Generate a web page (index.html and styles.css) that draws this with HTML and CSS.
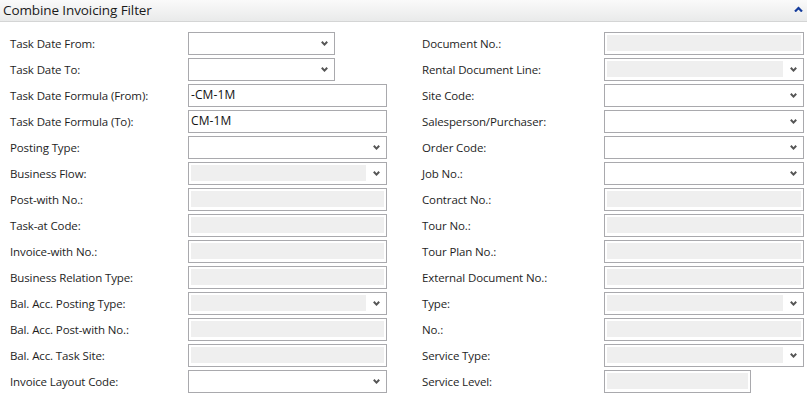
FILE: index.html
```html
<!DOCTYPE html>
<html>
<head>
<meta charset="utf-8">
<link rel="stylesheet" href="styles.css">
</head>
<body>
<div class="header">
  <span class="title">Combine Invoicing Filter</span>
  <svg class="collapse" width="9" height="6" viewBox="0 0 9 6"><path d="M1 5.5 L4.5 2 L8 5.5" fill="none" stroke="#143c9c" stroke-width="2.2"/></svg>
</div>
<div class="form">
  <label class="lbl">Task Date From:</label>
  <div class="field date select"><span class="val"></span><svg class="chev" width="7" height="5" viewBox="0 0 7 5"><path d="M0.8 0.8 L3.5 3.6 L6.2 0.8" fill="none" stroke="#555" stroke-width="2"/></svg></div>
  <label class="lbl r">Document No.:</label>
  <div class="field ro"><span class="fill"></span></div>

  <label class="lbl">Task Date To:</label>
  <div class="field date select"><span class="val"></span><svg class="chev" width="7" height="5" viewBox="0 0 7 5"><path d="M0.8 0.8 L3.5 3.6 L6.2 0.8" fill="none" stroke="#555" stroke-width="2"/></svg></div>
  <label class="lbl r">Rental Document Line:</label>
  <div class="field ro select"><span class="fill"></span><svg class="chev" width="7" height="5" viewBox="0 0 7 5"><path d="M0.8 0.8 L3.5 3.6 L6.2 0.8" fill="none" stroke="#555" stroke-width="2"/></svg></div>

  <label class="lbl">Task Date Formula (From):</label>
  <div class="field"><span class="val">-CM-1M</span></div>
  <label class="lbl r">Site Code:</label>
  <div class="field select"><span class="val"></span><svg class="chev" width="7" height="5" viewBox="0 0 7 5"><path d="M0.8 0.8 L3.5 3.6 L6.2 0.8" fill="none" stroke="#555" stroke-width="2"/></svg></div>

  <label class="lbl">Task Date Formula (To):</label>
  <div class="field"><span class="val">CM-1M</span></div>
  <label class="lbl r">Salesperson/Purchaser:</label>
  <div class="field select"><span class="val"></span><svg class="chev" width="7" height="5" viewBox="0 0 7 5"><path d="M0.8 0.8 L3.5 3.6 L6.2 0.8" fill="none" stroke="#555" stroke-width="2"/></svg></div>

  <label class="lbl">Posting Type:</label>
  <div class="field select"><span class="val"></span><svg class="chev" width="7" height="5" viewBox="0 0 7 5"><path d="M0.8 0.8 L3.5 3.6 L6.2 0.8" fill="none" stroke="#555" stroke-width="2"/></svg></div>
  <label class="lbl r">Order Code:</label>
  <div class="field select"><span class="val"></span><svg class="chev" width="7" height="5" viewBox="0 0 7 5"><path d="M0.8 0.8 L3.5 3.6 L6.2 0.8" fill="none" stroke="#555" stroke-width="2"/></svg></div>

  <label class="lbl">Business Flow:</label>
  <div class="field ro select"><span class="fill"></span><svg class="chev" width="7" height="5" viewBox="0 0 7 5"><path d="M0.8 0.8 L3.5 3.6 L6.2 0.8" fill="none" stroke="#555" stroke-width="2"/></svg></div>
  <label class="lbl r">Job No.:</label>
  <div class="field select"><span class="val"></span><svg class="chev" width="7" height="5" viewBox="0 0 7 5"><path d="M0.8 0.8 L3.5 3.6 L6.2 0.8" fill="none" stroke="#555" stroke-width="2"/></svg></div>

  <label class="lbl">Post-with No.:</label>
  <div class="field ro"><span class="fill"></span></div>
  <label class="lbl r">Contract No.:</label>
  <div class="field ro"><span class="fill"></span></div>

  <label class="lbl">Task-at Code:</label>
  <div class="field ro"><span class="fill"></span></div>
  <label class="lbl r">Tour No.:</label>
  <div class="field ro"><span class="fill"></span></div>

  <label class="lbl">Invoice-with No.:</label>
  <div class="field ro"><span class="fill"></span></div>
  <label class="lbl r">Tour Plan No.:</label>
  <div class="field ro"><span class="fill"></span></div>

  <label class="lbl">Business Relation Type:</label>
  <div class="field ro"><span class="fill"></span></div>
  <label class="lbl r">External Document No.:</label>
  <div class="field ro"><span class="fill"></span></div>

  <label class="lbl">Bal. Acc. Posting Type:</label>
  <div class="field ro select"><span class="fill"></span><svg class="chev" width="7" height="5" viewBox="0 0 7 5"><path d="M0.8 0.8 L3.5 3.6 L6.2 0.8" fill="none" stroke="#555" stroke-width="2"/></svg></div>
  <label class="lbl r">Type:</label>
  <div class="field ro select"><span class="fill"></span><svg class="chev" width="7" height="5" viewBox="0 0 7 5"><path d="M0.8 0.8 L3.5 3.6 L6.2 0.8" fill="none" stroke="#555" stroke-width="2"/></svg></div>

  <label class="lbl">Bal. Acc. Post-with No.:</label>
  <div class="field ro"><span class="fill"></span></div>
  <label class="lbl r">No.:</label>
  <div class="field ro"><span class="fill"></span></div>

  <label class="lbl">Bal. Acc. Task Site:</label>
  <div class="field ro"><span class="fill"></span></div>
  <label class="lbl r">Service Type:</label>
  <div class="field ro select"><span class="fill"></span><svg class="chev" width="7" height="5" viewBox="0 0 7 5"><path d="M0.8 0.8 L3.5 3.6 L6.2 0.8" fill="none" stroke="#555" stroke-width="2"/></svg></div>

  <label class="lbl">Invoice Layout Code:</label>
  <div class="field select"><span class="val"></span><svg class="chev" width="7" height="5" viewBox="0 0 7 5"><path d="M0.8 0.8 L3.5 3.6 L6.2 0.8" fill="none" stroke="#555" stroke-width="2"/></svg></div>
  <label class="lbl r">Service Level:</label>
  <div class="field ro date"><span class="fill"></span></div>
</div>
</body>
</html>
```
FILE: styles.css
```css
html, body {
  margin: 0;
  padding: 0;
  background: #ffffff;
}
body {
  font-family: "Open Sans", "Noto Sans", sans-serif;
  color: #1e1e1e;
  width: 807px;
  height: 403px;
  overflow: hidden;
}
.header {
  height: 21px;
  border-bottom: 1px solid #d4d5d5;
  background: linear-gradient(#fafafa, #e9eaea);
  display: flex;
  align-items: center;
  justify-content: space-between;
  padding: 0 4px 0 3px;
}
.title {
  font-size: 13.5px;
  color: #1a1a1a;
  line-height: 21px;
  letter-spacing: -0.1px;
}
.collapse {
  margin-top: -4px;
}
.form {
  display: grid;
  grid-template-columns: 178px 199px 217px 200px;
  grid-auto-rows: 23px;
  row-gap: 3px;
  padding: 10px 0 0 10px;
}
.lbl {
  font-size: 11.5px;
  display: flex;
  align-items: center;
  white-space: nowrap;
  letter-spacing: -0.12px;
  padding-bottom: 1px;
}
.lbl.r {
  padding-left: 35px;
}
.field {
  box-sizing: border-box;
  height: 23px;
  border: 1px solid #a9a9ad;
  background: #fff;
  display: flex;
  align-items: center;
  padding: 2px 2px 3px 2px;
}
.field.date {
  width: 147px;
}
.val {
  flex: 1;
  font-size: 12px;
  color: #111;
  line-height: 16px;
  letter-spacing: 0.1px;
}
.fill {
  flex: 1;
  height: 16px;
  background: #efefef;
  align-self: flex-start;
}
.field.select .fill {
  flex: 0 0 auto;
  width: calc(100% - 18px);
}
.chev {
  margin-left: auto;
  margin-right: 4px;
  flex: 0 0 auto;
}
```
